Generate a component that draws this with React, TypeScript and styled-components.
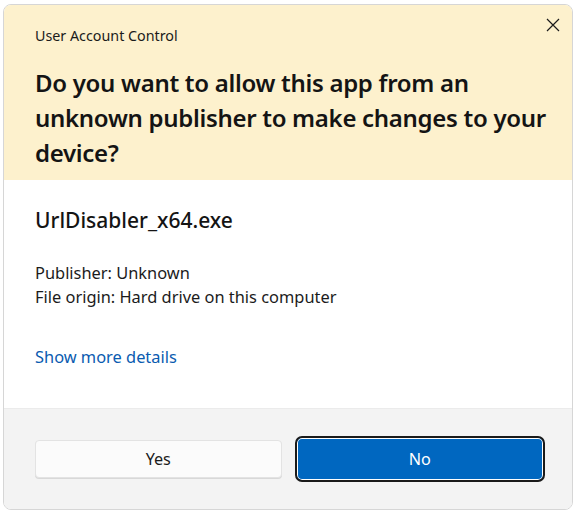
import React from 'react';
import styled, { createGlobalStyle } from 'styled-components';

const GlobalStyle = createGlobalStyle`
  html, body {
    margin: 0;
    padding: 0;
    background: #ffffff;
  }
  body {
    font-family: 'Noto Sans', 'Open Sans', sans-serif;
    color: #1a1a1a;
  }
`;

const Page = styled.div`
  padding: 4px 4px 0 3px;
`;

const Window = styled.div`
  width: 568px;
  height: 504px;
  border: 1px solid #d6d6d6;
  border-radius: 8px;
  overflow: hidden;
  display: flex;
  flex-direction: column;
  background: #ffffff;
`;

const Header = styled.div`
  position: relative;
  background: #fdf1cd;
  height: 175px;
  padding: 20px 8px 0 31px;
  box-sizing: border-box;
`;

const Caption = styled.div`
  font-size: 14.3px;
  line-height: 22px;
  color: #1b1b1b;
`;

const Question = styled.h1`
  margin: 18px 0 0;
  font-size: 24px;
  line-height: 35px;
  font-weight: 600;
  color: #141414;
  letter-spacing: -0.3px;
  white-space: nowrap;
`;

const CloseButton = styled.button`
  position: absolute;
  top: 6px;
  right: 3px;
  width: 32px;
  height: 28px;
  border: none;
  background: transparent;
  display: flex;
  align-items: center;
  justify-content: center;
  padding: 0;
`;

const Body = styled.div`
  flex: 1;
  padding: 25px 32px 0 31px;
  display: flex;
  flex-direction: column;
`;

const FileName = styled.div`
  font-size: 21px;
  font-weight: 500;
  line-height: 30px;
  color: #141414;
`;

const Details = styled.div`
  margin-top: 26px;
  font-size: 16.4px;
  line-height: 24px;
  color: #1b1b1b;
`;

const MoreLink = styled.a`
  margin-top: 36px;
  font-size: 16.4px;
  line-height: 24px;
  color: #0a5bb0;
  text-decoration: none;
  align-self: flex-start;
`;

const Footer = styled.div`
  height: 101px;
  background: #f3f3f3;
  border-top: 1px solid #ebebeb;
  box-sizing: border-box;
  display: grid;
  grid-template-columns: 1fr 1fr;
  gap: 9px;
  padding: 0 27px 0 31px;
  align-items: center;
`;

const Button = styled.button<{ $primary?: boolean }>`
  height: ${(p) => (p.$primary ? '46px' : '38px')};
  margin: ${(p) => (p.$primary ? '0' : '0 4px 0 0')};
  font-family: inherit;
  font-size: 16.2px;
  border-radius: ${(p) => (p.$primary ? '7px' : '4px')};
  cursor: pointer;
  color: ${(p) => (p.$primary ? '#ffffff' : '#1b1b1b')};
  background: ${(p) => (p.$primary ? '#0067c0' : '#fbfbfb')};
  border: ${(p) => (p.$primary ? '2px solid #1a1a1a' : '1px solid #e3e3e3')};
  box-shadow: ${(p) => (p.$primary ? 'inset 0 0 0 1px #ffffff' : '0 1px 0 #d8d8d8')};
`;

export default function App() {
  return (
    <>
      <GlobalStyle />
      <Page>
        <Window>
          <Header>
            <Caption>User Account Control</Caption>
            <Question>
              Do you want to allow this app from an
              <br />
              unknown publisher to make changes to your
              <br />
              device?
            </Question>
            <CloseButton aria-label="Close">
              <svg width="14" height="14" viewBox="0 0 14 14">
                <path d="M1 1L13 13M13 1L1 13" stroke="#1b1b1b" strokeWidth="1.2" fill="none" />
              </svg>
            </CloseButton>
          </Header>
          <Body>
            <FileName>UrlDisabler_x64.exe</FileName>
            <Details>
              Publisher: Unknown
              <br />
              File origin: Hard drive on this computer
            </Details>
            <MoreLink href="#">Show more details</MoreLink>
          </Body>
          <Footer>
            <Button>Yes</Button>
            <Button $primary>No</Button>
          </Footer>
        </Window>
      </Page>
    </>
  );
}
